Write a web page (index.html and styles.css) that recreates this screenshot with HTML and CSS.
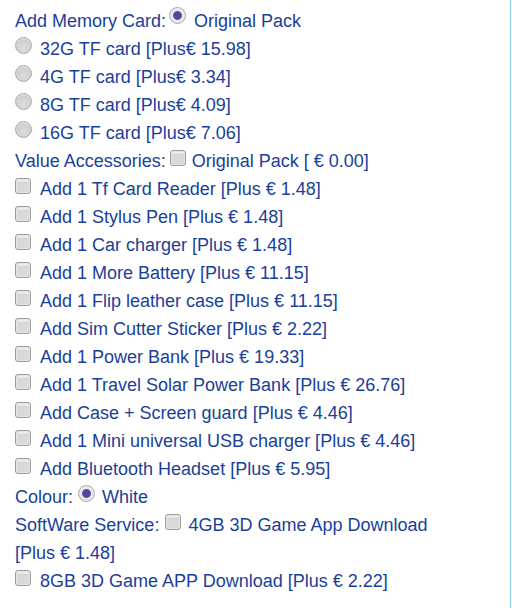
FILE: index.html
```html
<!DOCTYPE html>
<html>
<head>
<meta charset="utf-8">
<link rel="stylesheet" href="styles.css">
</head>
<body>
<div class="panel">
  <div class="options">
    <div class="row">Add Memory Card:<input type="radio" class="radio r-mem" name="mem" checked>Original Pack</div>
    <div class="row"><input type="radio" class="radio r-start" name="mem">32G TF card [Plus€ 15.98]</div>
    <div class="row"><input type="radio" class="radio r-start" name="mem">4G TF card [Plus€ 3.34]</div>
    <div class="row"><input type="radio" class="radio r-start" name="mem">8G TF card [Plus€ 4.09]</div>
    <div class="row"><input type="radio" class="radio r-start" name="mem">16G TF card [Plus€ 7.06]</div>
    <div class="row">Value Accessories:<input type="checkbox" class="check c-val">Original Pack [ € 0.00]</div>
    <div class="row"><input type="checkbox" class="check c-start">Add 1 Tf Card Reader [Plus € 1.48]</div>
    <div class="row"><input type="checkbox" class="check c-start">Add 1 Stylus Pen [Plus € 1.48]</div>
    <div class="row"><input type="checkbox" class="check c-start">Add 1 Car charger [Plus € 1.48]</div>
    <div class="row"><input type="checkbox" class="check c-start">Add 1 More Battery [Plus € 11.15]</div>
    <div class="row"><input type="checkbox" class="check c-start">Add 1 Flip leather case [Plus € 11.15]</div>
    <div class="row"><input type="checkbox" class="check c-start">Add Sim Cutter Sticker [Plus € 2.22]</div>
    <div class="row"><input type="checkbox" class="check c-start">Add 1 Power Bank [Plus € 19.33]</div>
    <div class="row"><input type="checkbox" class="check c-start">Add 1 Travel Solar Power Bank [Plus € 26.76]</div>
    <div class="row"><input type="checkbox" class="check c-start">Add Case + Screen guard [Plus € 4.46]</div>
    <div class="row"><input type="checkbox" class="check c-start">Add 1 Mini universal USB charger [Plus € 4.46]</div>
    <div class="row"><input type="checkbox" class="check c-start">Add Bluetooth Headset [Plus € 5.95]</div>
    <div class="row">Colour:<input type="radio" class="radio r-col" name="col" checked>White</div>
    <div class="row">SoftWare Service:<input type="checkbox" class="check c-soft">4GB 3D Game App Download [Plus € 1.48]</div>
    <div class="row"><input type="checkbox" class="check c-start">8GB 3D Game APP Download [Plus € 2.22]</div>
  </div>
</div>
</body>
</html>
```

FILE: styles.css
```css
html, body {
  margin: 0;
  padding: 0;
  background: #ffffff;
}

.panel {
  width: 510px;
  height: 608px;
  border-right: 1px solid #8fd0f4;
  box-sizing: content-box;
  overflow: hidden;
}

.options {
  width: 450px;
  padding: 7px 0 0 15px;
  font-family: "Liberation Sans", Arial, sans-serif;
  font-size: 18px;
  line-height: 28px;
  color: #1a3f99;
}

.row {
  margin: 0;
}

.radio,
.check {
  -webkit-appearance: none;
  appearance: none;
  display: inline-block;
  vertical-align: baseline;
  margin: 0 0 1px 0;
  padding: 0;
  box-sizing: border-box;
  position: relative;
}

.radio {
  width: 17px;
  height: 17px;
  border-radius: 50%;
  border: 1px solid #a8a8a8;
  background: radial-gradient(circle at 50% 70%, #dedede 0%, #d0d0d0 55%, #c8c8c8 100%);
  box-shadow: inset 0 1px 1px #efefef;
}

.radio:checked {
  background: radial-gradient(circle, #4f46a4 0, #4f46a4 3.4px, #6a66b4 4.2px, #ececec 4.8px, #dedede 100%);
  border-color: #aaaaaa;
}

.check {
  width: 16px;
  height: 16px;
  border-radius: 3px;
  border: 1px solid #a0999c;
  background: linear-gradient(#eeeeee 0, #eeeeee 2px, #d8d8d8 3px, #dadada 100%);
  box-shadow: inset 0 0 0 1px #e6e6e6;
}

.r-start { margin-right: 8px; }
.r-mem { margin-left: 3px; margin-right: 8px; margin-bottom: 3px; }
.r-col { margin-left: 5px; margin-right: 7px; }

.c-start { margin-right: 9px; }
.c-val { margin-left: 4px; margin-right: 6px; }
.c-soft { margin-left: 6px; margin-right: 7px; }
```
